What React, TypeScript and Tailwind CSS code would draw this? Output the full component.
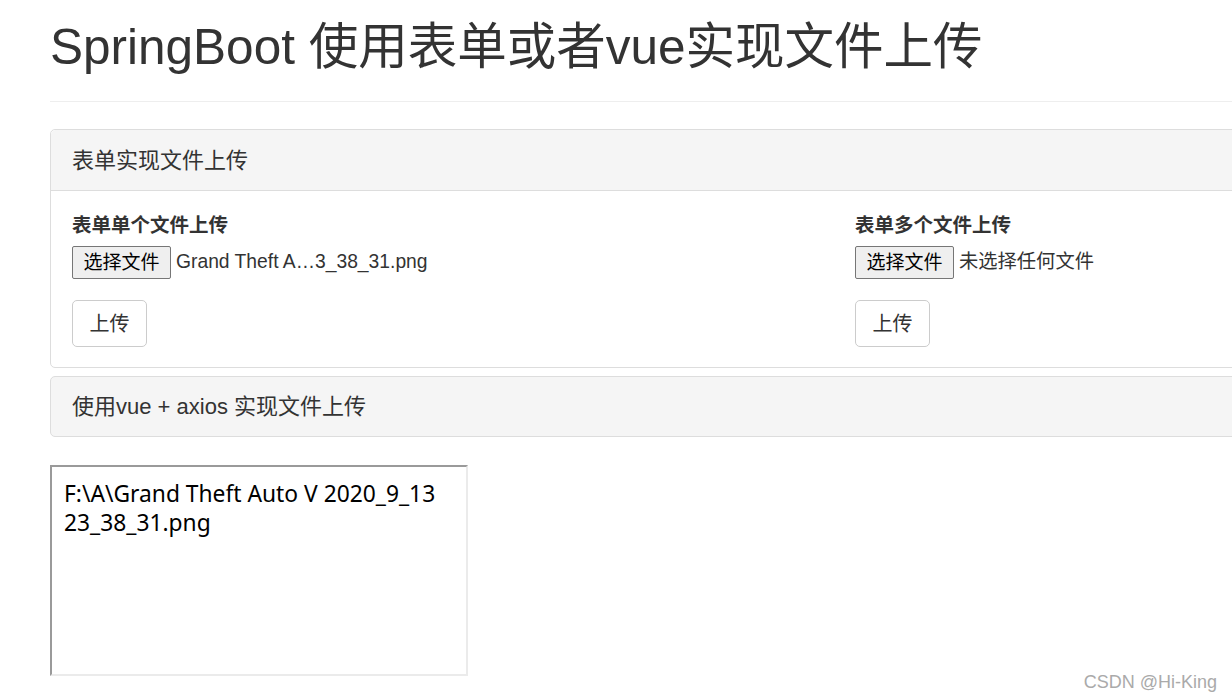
const sans = "font-['Liberation_Sans','Noto_Sans_CJK_SC',sans-serif]";

function FileInput({ fileName }: { fileName: string }) {
  return (
    <div className="flex items-center h-[33px]">
      <button
        type="button"
        className="w-[99px] h-[33px] bg-[#efefef] border border-[#767676] rounded-[2px] text-[19px] text-black leading-none"
      >
        选择文件
      </button>
      <span className="ml-[5px] text-[19.3px] text-[#333]">{fileName}</span>
    </div>
  );
}

function UploadColumn({ label, fileName }: { label: string; fileName: string }) {
  return (
    <div className="flex flex-col items-start">
      <label className="text-[19.5px] font-bold text-[#333] leading-[30px] mb-[6px]">{label}</label>
      <FileInput fileName={fileName} />
      <button
        type="button"
        className="mt-[21px] w-[75px] h-[47px] border border-[#ccc] rounded-[5px] bg-white text-[20px] text-[#333]"
      >
        上传
      </button>
    </div>
  );
}

export default function App() {
  return (
    <div className={`relative w-[1232px] h-[700px] overflow-hidden bg-white ${sans}`}>
      <div className="pl-[50px] w-[1700px]">
        <h1 className="pt-[19px] text-[49.5px] leading-[55px] font-normal text-[#333]">
          SpringBoot 使用表单或者vue实现文件上传
        </h1>
        <hr className="mt-[27px] border-0 border-t border-[#eee]" />

        <div className="mt-[27px] w-[1600px] border border-[#ddd] rounded-[5px] bg-white">
          <div className="h-[61px] px-[21px] flex items-center bg-[#f5f5f5] border-b border-[#ddd] rounded-t-[5px] text-[22px] text-[#333]">
            表单实现文件上传
          </div>
          <div className="px-[21px] pt-[19px] pb-[20px] grid grid-cols-[783px_783px]">
            <UploadColumn label="表单单个文件上传" fileName="Grand Theft A…3_38_31.png" />
            <UploadColumn label="表单多个文件上传" fileName="未选择任何文件" />
          </div>
        </div>

        <div className="mt-[8px] w-[1600px] h-[61px] px-[21px] flex items-center border border-[#ddd] rounded-[5px] bg-[#f5f5f5] text-[22px] text-[#333]">
          使用vue + axios 实现文件上传
        </div>

        <textarea
          readOnly
          defaultValue="F:\A\Grand Theft Auto V 2020_9_13 23_38_31.png"
          className="mt-[28px] block w-[418px] h-[211px] resize-none px-[12px] pt-[12px] border-2 border-t-[#9a9a9a] border-l-[#9a9a9a] border-r-[#ebebeb] border-b-[#ebebeb] text-[22.8px] leading-[29px] text-black font-['Noto_Sans',sans-serif] outline-none"
        />
      </div>

      <div className="absolute right-[15px] top-[669px] text-[18px] text-[#aaa]">CSDN @Hi-King</div>
    </div>
  );
}
